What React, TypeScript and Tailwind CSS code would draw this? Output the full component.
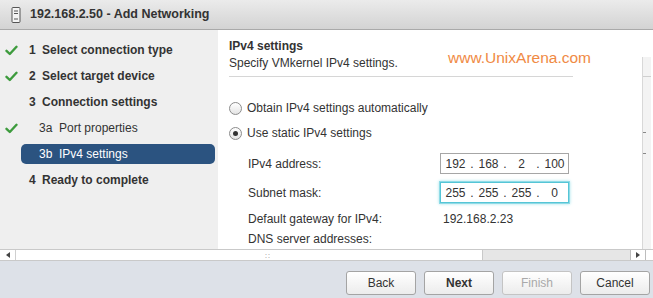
import React from 'react';

const steps = [
  { num: '1', label: 'Select connection type', done: true, bold: true, sub: false },
  { num: '2', label: 'Select target device', done: true, bold: true, sub: false },
  { num: '3', label: 'Connection settings', done: false, bold: true, sub: false },
  { num: '3a', label: 'Port properties', done: true, bold: false, sub: true },
  { num: '3b', label: 'IPv4 settings', done: false, bold: false, sub: true, active: true },
  { num: '4', label: 'Ready to complete', done: false, bold: true, sub: false },
];

function Check() {
  return (
    <svg width="13" height="11" viewBox="0 0 13 11" className="shrink-0">
      <path d="M1.5 5.8 L4.8 9 L11.5 1.8" fill="none" stroke="#3d9b3d" strokeWidth="2.4" strokeLinecap="round" strokeLinejoin="round" />
    </svg>
  );
}

function ServerIcon() {
  return (
    <svg width="10" height="16" viewBox="0 0 10 16">
      <rect x="1" y="0.5" width="8" height="15" rx="1" fill="#f4f4f4" stroke="#555" strokeWidth="1" />
      <line x1="3" y1="4" x2="7" y2="4" stroke="#555" strokeWidth="1" />
      <line x1="3" y1="6.5" x2="7" y2="6.5" stroke="#555" strokeWidth="1" />
      <line x1="3" y1="12" x2="7" y2="12" stroke="#555" strokeWidth="1" />
    </svg>
  );
}

function Radio({ checked }: { checked?: boolean }) {
  return (
    <span className="w-[13px] h-[13px] rounded-full border border-[#8c8c8c] bg-gradient-to-b from-white to-[#e4e4e4] flex items-center justify-center shrink-0">
      {checked && <span className="w-[5px] h-[5px] rounded-full bg-[#333]" />}
    </span>
  );
}

function IpBox({ octets, focused }: { octets: string[]; focused?: boolean }) {
  return (
    <div
      className={
        'w-[129px] h-[21px] flex items-center pl-[2px] bg-white border ' +
        (focused
          ? 'border-[#55c5d6] shadow-[0_0_0_1px_#8fdbe6,0_0_3px_1px_#a8e4ec]'
          : 'border-[#a6a6a6]')
      }
    >
      {octets.map((o, i) => (
        <React.Fragment key={i}>
          <span className="w-[25px] text-center">{o}</span>
          {i < 3 && <span className="w-[8px] text-center">.</span>}
        </React.Fragment>
      ))}
    </div>
  );
}

function Button({ children, bold, disabled }: { children: string; bold?: boolean; disabled?: boolean }) {
  return (
    <button
      className={
        'w-[70px] h-[24px] rounded-[3px] border bg-gradient-to-b from-white to-[#ececec] text-[12px] ' +
        (disabled ? 'border-[#c4c4c4] text-[#a9a9a9]' : 'border-[#a4a4a4] text-[#333]') +
        (bold ? ' font-bold' : '')
      }
    >
      {children}
    </button>
  );
}

export default function App() {
  return (
    <div className="w-[653px] h-[298px] overflow-hidden flex flex-col bg-white text-[12px] text-[#333] font-['Liberation_Sans',Arial,sans-serif]">
      {/* title bar */}
      <div className="h-[30px] shrink-0 flex items-center pl-[11px] gap-[9px] border-b border-[#a9a9a9] bg-gradient-to-b from-[#ebebeb] to-[#d3d3d3]">
        <ServerIcon />
        <span className="font-bold text-[12.5px] text-[#333]">192.168.2.50 - Add Networking</span>
      </div>

      {/* body */}
      <div className="h-[219px] shrink-0 flex">
        {/* steps */}
        <div className="w-[218px] shrink-0 bg-[#efefef] pt-[7px]">
          {steps.map((s) => (
            <div key={s.num} className="h-[26px] flex items-center">
              <div className="w-[21px] shrink-0 flex justify-center pl-[1px]">{s.done && <Check />}</div>
              <div
                className={
                  'w-[194px] h-[20px] flex items-center rounded-[5px] ' +
                  (s.active ? 'bg-[#2b5380] text-white' : '') +
                  (s.sub ? ' pl-[18px]' : ' pl-[8px]') +
                  (s.bold ? ' font-bold' : '')
                }
              >
                <span className={s.sub ? 'w-[20px]' : 'w-[13px]'}>{s.num}</span>
                <span>{s.label}</span>
              </div>
            </div>
          ))}
        </div>

        {/* content */}
        <div className="relative flex-1 pl-[11px] pt-[8px]">
          <div className="font-bold leading-[16px]">IPv4 settings</div>
          <div className="leading-[16px] mt-[1px]">Specify VMkernel IPv4 settings.</div>
          <div className="absolute left-[230px] top-[19px] text-[15.5px] leading-[18px] text-[#f08a44]">www.UnixArena.com</div>
          <div className="w-[344px] h-px bg-[#d6d6d6] mt-[5px]" />

          <div className="mt-[21px] h-[20px] flex items-center gap-[5px]">
            <Radio />
            <span>Obtain IPv4 settings automatically</span>
          </div>
          <div className="mt-[5px] h-[20px] flex items-center gap-[5px]">
            <Radio checked />
            <span>Use static IPv4 settings</span>
          </div>

          <div className="pl-[19px]">
            <div className="mt-[10px] h-[21px] flex items-center">
              <span className="w-[192px]">IPv4 address:</span>
              <IpBox octets={['192', '168', '2', '100']} />
            </div>
            <div className="mt-[8px] h-[21px] flex items-center">
              <span className="w-[192px]">Subnet mask:</span>
              <IpBox octets={['255', '255', '255', '0']} focused />
            </div>
            <div className="mt-[8px] h-[16px] flex items-center">
              <span className="w-[195px]">Default gateway for IPv4:</span>
              <span>192.168.2.23</span>
            </div>
            <div className="mt-[4px] h-[16px] flex items-center">
              <span>DNS server addresses:</span>
            </div>
          </div>
        </div>

        {/* partial vertical scrollbar */}
        <div className="w-[11px] shrink-0 flex flex-col pt-[27px]">
          <div className="flex-1 border-l border-[#d8d8d8] bg-[#f3f3f3] mr-[2px]">
            <div className="h-px bg-[#cfcfcf] mt-[19px]" />
            <div className="w-[3px] h-px bg-[#888] mt-[55px]" />
            <div className="w-[3px] h-px bg-[#888] mt-[20px]" />
          </div>
        </div>
      </div>

      {/* horizontal scrollbar */}
      <div className="h-[12px] shrink-0 flex border-y border-[#c9c9c9] bg-white">
        <div className="w-[16px] flex items-center justify-center border-r border-[#cfcfcf]">
          <span className="w-0 h-0 border-y-[3px] border-y-transparent border-r-[4px] border-r-[#444]" />
        </div>
        <div className="w-[467px] flex items-center justify-center border-r border-[#c9c9c9]">
          <span className="ml-[38px] text-[7px] leading-none tracking-[1px] text-[#777]">::</span>
        </div>
        <div className="flex-1 bg-[#e6e6e6]" />
        <div className="w-[16px] flex items-center justify-center border-x border-[#bdbdbd] bg-white">
          <span className="w-0 h-0 border-y-[3px] border-y-transparent border-l-[4px] border-l-[#444]" />
        </div>
        <div className="w-[7px] bg-white" />
      </div>

      {/* footer */}
      <div className="flex-1 bg-[#dde1e8] flex justify-end gap-[8px] pt-[10px] pr-[3px]">
        <Button>Back</Button>
        <Button bold>Next</Button>
        <Button disabled>Finish</Button>
        <Button>Cancel</Button>
      </div>
    </div>
  );
}
